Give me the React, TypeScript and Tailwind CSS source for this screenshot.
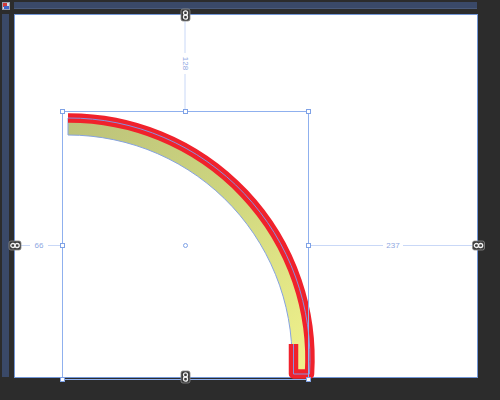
import React from 'react'

const font = { fontFamily: '"Liberation Sans", Arial, sans-serif' }

function Link({ x, y, vertical }: { x: number; y: number; vertical?: boolean }) {
  // small chain badge sitting on the canvas edge
  if (vertical) {
    return (
      <g transform={`translate(${x - 4.5} ${y - 6})`}>
        <rect x="0" y="0" width="9" height="12" rx="2" fill="#3a3a3a" stroke="#8a8a8a" strokeWidth="0.8" />
        <rect x="2.5" y="1.8" width="4" height="4.2" rx="2" fill="none" stroke="#f2f2f2" strokeWidth="1.3" />
        <rect x="2.5" y="6" width="4" height="4.2" rx="2" fill="none" stroke="#f2f2f2" strokeWidth="1.3" />
      </g>
    )
  }
  return (
    <g transform={`translate(${x - 6} ${y - 4.5})`}>
      <rect x="0" y="0" width="12" height="9" rx="2" fill="#3a3a3a" stroke="#8a8a8a" strokeWidth="0.8" />
      <rect x="1.8" y="2.5" width="4.2" height="4" rx="2" fill="none" stroke="#f2f2f2" strokeWidth="1.3" />
      <rect x="6" y="2.5" width="4.2" height="4" rx="2" fill="none" stroke="#f2f2f2" strokeWidth="1.3" />
    </g>
  )
}

function Handle({ x, y, round }: { x: number; y: number; round?: boolean }) {
  if (round) return <circle cx={x} cy={y} r="2" fill="#fff" stroke="#7fa2e6" strokeWidth="1" />
  return <rect x={x - 2} y={y - 2} width="4" height="4" fill="#fff" stroke="#7fa2e6" strokeWidth="1" />
}

function Drawing() {
  const outer = 'M 67 117 A 241 241 0 0 1 307.4 375'
  const ring = 'M 67 117 A 241 241 0 0 1 307.4 375 L 290.4 375 A 224 224 0 0 0 67 134 Z'
  const stroke = 'M 67 117 A 241 241 0 0 1 308.5 373 L 292.5 373 L 292.5 343'
  return (
    <svg
      className="absolute left-[-14px] top-[-14px] overflow-visible"
      width="500"
      height="400"
      viewBox="0 0 500 400"
      style={font}
    >
      <defs>
        <linearGradient id="fillGrad" x1="67" y1="117" x2="308" y2="375" gradientUnits="userSpaceOnUse">
          <stop offset="0" stopColor="#bcc27a" />
          <stop offset="0.45" stopColor="#cdd57f" />
          <stop offset="1" stopColor="#f2f38c" />
        </linearGradient>
      </defs>

      {/* dimension lines */}
      <line x1="184" y1="15" x2="184" y2="52" stroke="#c9d8f7" strokeWidth="1" />
      <line x1="184" y1="73" x2="184" y2="110" stroke="#c9d8f7" strokeWidth="1" />
      <text x="184" y="62.5" fill="#8fa8e2" fontSize="8" textAnchor="middle" dominantBaseline="middle" transform="rotate(90 184 62.5)">128</text>

      <line x1="15" y1="244.5" x2="29" y2="244.5" stroke="#c9d8f7" strokeWidth="1" />
      <line x1="47" y1="244.5" x2="61" y2="244.5" stroke="#c9d8f7" strokeWidth="1" />
      <text x="38" y="245" fill="#8fa8e2" fontSize="8" textAnchor="middle" dominantBaseline="middle">66</text>

      <line x1="307" y1="244.5" x2="382" y2="244.5" stroke="#c9d8f7" strokeWidth="1" />
      <line x1="402" y1="244.5" x2="477" y2="244.5" stroke="#c9d8f7" strokeWidth="1" />
      <text x="392" y="245" fill="#8fa8e2" fontSize="8" textAnchor="middle" dominantBaseline="middle">237</text>

      {/* shape */}
      <path d={ring} fill="url(#fillGrad)" stroke="#86a3e0" strokeWidth="1" />
      <path d={stroke} fill="none" stroke="#f0222c" strokeWidth="9.5" strokeLinejoin="round" />
      <path d={stroke} fill="none" stroke="#8a8fe0" strokeWidth="1" />
      <path d={outer} fill="none" stroke="#8a8fe0" strokeWidth="0" />

      {/* selection box */}
      <rect x="61.5" y="110.5" width="246" height="268" fill="none" stroke="#8fb0ee" strokeWidth="1" />
      <Handle x={61.5} y={110.5} />
      <Handle x={184.5} y={110.5} />
      <Handle x={307.5} y={110.5} />
      <Handle x={61.5} y={244.5} />
      <Handle x={184.5} y={244.5} round />
      <Handle x={307.5} y={244.5} />
      <Handle x={61.5} y={378.5} />
      <Handle x={307.5} y={378.5} />

      <Link x={184.5} y={14} vertical />
      <Link x={184.5} y={376} vertical />
      <Link x={14} y={244.5} />
      <Link x={477.5} y={244.5} />
    </svg>
  )
}

export default function App() {
  return (
    <div className="w-[500px] h-[400px] bg-[#2c2c2c] overflow-hidden flex flex-col">
      <div className="flex items-start pt-[2px] pl-[2px] h-[14px] shrink-0">
        <div className="w-[8px] h-[8px] bg-[#d8dbe4] border border-[#9aa0b0] relative overflow-hidden">
          <div className="absolute left-0 top-0 w-[4px] h-[4px] bg-[#d23a3a]" />
          <div className="absolute right-0 bottom-0 w-[5px] h-[3px] bg-[#3c64c8]" />
        </div>
        <div className="ml-[4px] w-[463px] h-[7px] bg-[#3a4968] border-b border-[#4a5a7a]" />
      </div>
      <div className="flex items-start pl-[2px]">
        <div className="w-[7px] h-[363px] bg-[#3a4968]" />
        <div className="ml-[5px] w-[464px] h-[364px] bg-white border border-[#7296d6] relative">
          <Drawing />
        </div>
      </div>
    </div>
  )
}
